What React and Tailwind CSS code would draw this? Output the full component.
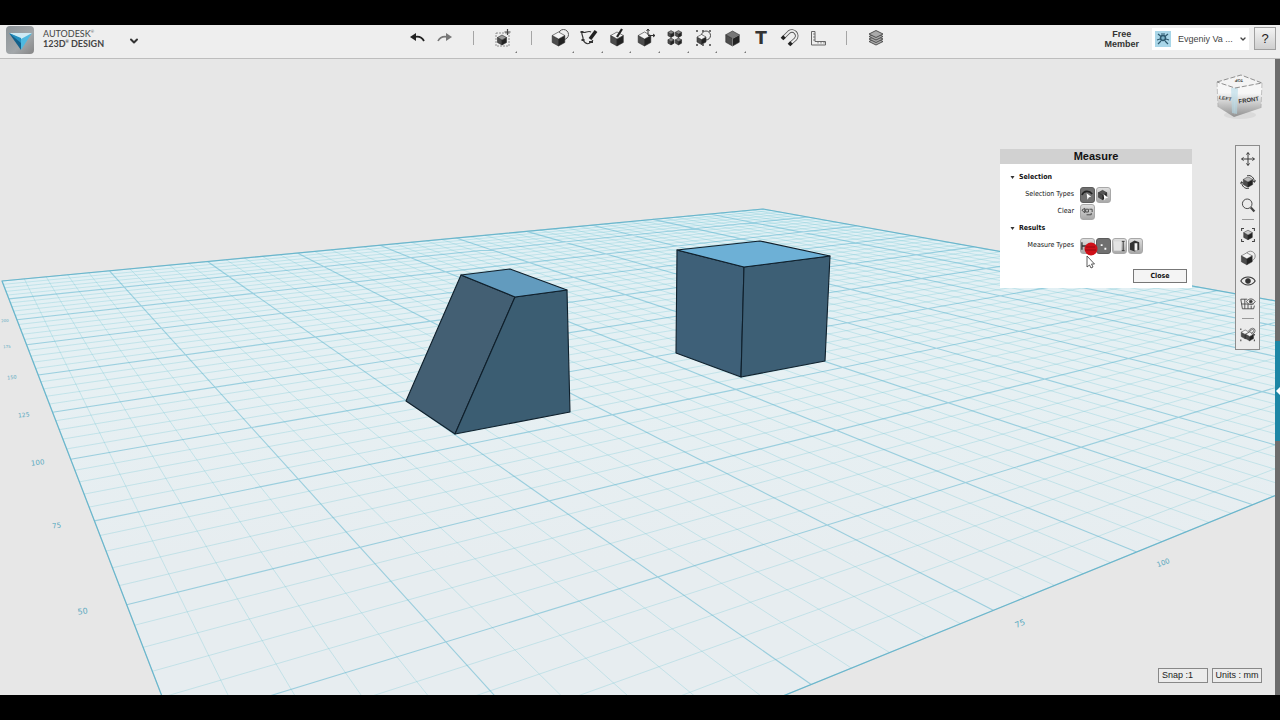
import React from 'react';
import { ChevronDown } from 'lucide-react';

// Perspective of the 250 x 250 mm work plane, one unit is 25 mm
const project = (u, v) => {
  const w = 1 + 0.048047 * u - 0.073887 * v;
  return [(112.76 * u + 6.226 * v + 2) / w, (2.842 * u - 4.217 * v + 281) / w];
};

const linePath = (from, to) => `M${from.join(' ')}L${to.join(' ')}`;

const gridLines = (major) =>
  Array.from({ length: 51 }, (_, i) => i)
    .filter((i) => (i % 5 === 0) === major)
    .map((i) => linePath(project(i / 5, 0), project(i / 5, 10)) + linePath(project(0, i / 5), project(10, i / 5)))
    .join('');

const planeCorners = [project(0, 0), project(10, 0), project(10, 10), project(0, 10)];
const planePoints = planeCorners.map((p) => p.join(',')).join(' ');

const rulerLabels = [
  { text: '50', x: 83, y: 614, size: 8, angle: -8 },
  { text: '75', x: 57, y: 528, size: 7, angle: -8 },
  { text: '100', x: 38, y: 465, size: 7, angle: -7 },
  { text: '125', x: 24, y: 417, size: 6, angle: -6 },
  { text: '150', x: 12, y: 379, size: 5, angle: -5 },
  { text: '175', x: 7, y: 348, size: 4, angle: -5 },
  { text: '200', x: 5, y: 322, size: 4, angle: -5 },
  { text: '75', x: 1021, y: 626, size: 8, angle: -22 },
  { text: '100', x: 1164, y: 565, size: 7, angle: -20 },
];

const Scene = () => (
  <svg
    className="absolute inset-0 w-full h-full"
    viewBox="0 59 1275 636"
    preserveAspectRatio="xMidYMid slice"
    role="img"
    aria-label="Work plane with two solids"
  >
    <defs>
      <linearGradient id="plane" x1="0" y1="209" x2="0" y2="560" gradientUnits="userSpaceOnUse">
        <stop offset="0" stopColor="#e0f0f5" />
        <stop offset="0.5" stopColor="#e6f0f3" />
        <stop offset="1" stopColor="#e7edf0" />
      </linearGradient>
    </defs>
    <polygon points={planePoints} fill="url(#plane)" />
    <path d={gridLines(false)} stroke="#6cc3d2" strokeOpacity="0.29" fill="none" />
    <path d={gridLines(true)} stroke="#4fb0cc" strokeOpacity="0.5" strokeWidth="1.1" fill="none" />
    <polygon points={planePoints} fill="none" stroke="#4aa6c2" strokeWidth="1.2" strokeOpacity="0.6" />

    {rulerLabels.map(({ text, x, y, size, angle }) => (
      <text
        key={`${text}-${x}`}
        x={x}
        y={y}
        fontSize={size}
        textAnchor="middle"
        fill="#5aa9bf"
        fontFamily="'DejaVu Sans', sans-serif"
        transform={`rotate(${angle} ${x} ${y})`}
      >
        {text}
      </text>
    ))}

    <g stroke="#0f1f2b" strokeWidth="1.1" strokeLinejoin="round">
      <polygon points="461,275 515,297 455,434 406,401" fill="#435f73" />
      <polygon points="515,297 567,290 570,412 455,434" fill="#3b5d72" />
      <polygon points="461,275 510,269 567,290 515,297" fill="#629bbe" />
      <polygon points="677,250 744,267 741,377 676,353" fill="#3e6078" />
      <polygon points="744,267 830,256 825,361 741,377" fill="#3d5f75" />
      <polygon points="677,250 760,241 830,256 744,267" fill="#6db0d6" />
    </g>
  </svg>
);

const Cube = ({ x = 10, y = 10, r = 8, top = '#f4f4f4' }) => {
  const w = r * 0.9;
  const h = r * 0.5;
  return (
    <g stroke="#2e2e2e" strokeWidth="0.6" strokeLinejoin="round">
      <polygon points={`${x - w},${y - h} ${x},${y} ${x},${y + r} ${x - w},${y + h}`} fill="#4c4c4c" />
      <polygon points={`${x + w},${y - h} ${x},${y} ${x},${y + r} ${x + w},${y + h}`} fill="#222" />
      <polygon points={`${x},${y - r} ${x + w},${y - h} ${x},${y} ${x - w},${y - h}`} fill={top} />
    </g>
  );
};

const icons = {
  undo: (
    <g>
      <path d="M3 9L9 5V13Z" fill="#222" />
      <path d="M7 9C11 8 15 9 17 13" fill="none" stroke="#222" strokeWidth="1.8" />
    </g>
  ),
  redo: (
    <g>
      <path d="M17 9L11 5V13Z" fill="#777" />
      <path d="M13 9C9 8 5 9 3 13" fill="none" stroke="#777" strokeWidth="1.6" />
    </g>
  ),
  insert: (
    <g>
      <rect x="3" y="5" width="13" height="13" fill="none" stroke="#777" strokeWidth="0.8" strokeDasharray="2 1" />
      <Cube x={9} y={12} r={5} top="#999" />
      <path d="M14.5 1V7M11.5 4H17.5" stroke="#444" strokeWidth="1.2" />
    </g>
  ),
  primitives: (
    <g>
      <circle cx="13.5" cy="6.5" r="5" fill="#eee" stroke="#555" />
      <Cube x={8.5} y={11} r={7} />
    </g>
  ),
  sketch: (
    <g fill="none" stroke="#333">
      <path d="M12 4C9 2 6 6 3 4C2 7 5 9 4 12C7 17 10 17 14 12" strokeWidth="1.2" />
      <path d="M17 3L11 11" strokeWidth="3.4" stroke="#222" />
      <path d="M1.5 4H4.5M2.5 12H5.5M10 14H14" strokeWidth="1.8" />
    </g>
  ),
  construct: (
    <g>
      <Cube x={10} y={11} r={7} />
      <path d="M15 1L10 9" stroke="#222" strokeWidth="2.2" />
    </g>
  ),
  modify: (
    <g>
      <Cube x={8.5} y={11} r={7} />
      <path d="M12 7V1M10.5 3L12 1L13.500 3M12 7.5H19M17 6L19 7.5L17 9" fill="none" stroke="#333" />
    </g>
  ),
  pattern: (
    <g>
      <Cube x={6} y={6} r={3.4} top="#888" />
      <Cube x={13.5} y={6} r={3.4} top="#888" />
      <Cube x={6} y={13.5} r={3.4} top="#888" />
      <Cube x={13.5} y={13.5} r={3.4} top="#888" />
    </g>
  ),
  grouping: (
    <g>
      <path d="M3 3H5M9 3H11M16 3H18M3 17H5M9 17H11M16 17H18" stroke="#444" strokeWidth="1.4" />
      <circle cx="13" cy="7.5" r="4.5" fill="#eee" stroke="#444" />
      <Cube x={8.5} y={11.5} r={5} />
    </g>
  ),
  combine: (
    <g>
      <Cube x={10.5} y={10.5} r={7.5} top="#777" />
      <path d="M10.5 18V10.5L17 7" stroke="#aaa" strokeWidth="0.6" fill="none" />
    </g>
  ),
  text: (
    <text x="10" y="16" fontSize="17" fontWeight="bold" textAnchor="middle" fill="#333" fontFamily="'DejaVu Sans', sans-serif">
      T
    </text>
  ),
  magnet: (
    <g fill="none">
      <path d="M4 10L10 4A4.8 4.8 0 0 1 16.5 11L11 16" stroke="#555" strokeWidth="3.6" />
      <path d="M4 10L10 4A4.8 4.8 0 0 1 16.5 11L11 16" stroke="#eee" strokeWidth="1.9" />
      <path d="M3 11L5.5 8.5M10 17L12.500 14.500" stroke="#222" strokeWidth="3.8" />
    </g>
  ),
  ruler: (
    <g fill="none" stroke="#666">
      <path d="M3.5 3.5H7V13.5H17.5V17H3.5Z" />
      <path d="M5 6H7M5 9H7M5 12H7M10 14V15.5M13 14V15.5M16 14V15.5" strokeWidth="0.8" />
    </g>
  ),
  layers: (
    <g stroke="#444" strokeWidth="0.9" strokeLinejoin="round">
      {[14, 11.5, 9, 6.5].map((y) => (
        <polygon key={y} points={`10,${y - 4} 17,${y - 0.5} 10,${y + 3} 3,${y - 0.5}`} fill="#aaa" />
      ))}
    </g>
  ),
  pan: (
    <path
      d="M10 2V18M2 10H18M8 4.5L10 2L12 4.5M8 15.5L10 18L12 15.5M4.500 8L2 10L4.500 12M15.5 8L18 10L15.5 12"
      fill="none"
      stroke="#333"
      strokeWidth="1.2"
    />
  ),
  orbit: (
    <g>
      <Cube x={10} y={10} r={6.5} top="#bbb" />
      <path d="M9 2C14 1 18 5 18 10M16 8L18 10.5L19.5 8M11 18C6 19 2 15 2 10M0.5 12L2 9.5L4 12" fill="none" stroke="#333" strokeWidth="1.2" />
    </g>
  ),
  zoom: (
    <g fill="none" stroke="#444">
      <circle cx="9" cy="8.5" r="6" strokeWidth="1.2" />
      <path d="M13.5 13L18 18" strokeWidth="2.8" />
    </g>
  ),
  fit: (
    <g>
      <path d="M2 5V2H5M15 2H18V5M18 15V18H15M5 18H2V15" fill="none" stroke="#444" strokeWidth="1.3" />
      <Cube x={10} y={10} r={6} top="#ccc" />
    </g>
  ),
  shading: (
    <g>
      <circle cx="13" cy="7.5" r="6" fill="#eee" stroke="#777" />
      <Cube x={8.5} y={11} r={7.5} />
    </g>
  ),
  eye: (
    <g fill="none" stroke="#333" strokeWidth="1.3">
      <path d="M1 10C5 3.5 15 3.5 19 10C15 16.5 5 16.5 1 10Z" />
      <circle cx="10" cy="10" r="2.8" fill="#333" />
    </g>
  ),
  gridEye: (
    <g fill="none" stroke="#444" strokeWidth="1.1">
      <path d="M1 4H9M1 4L3 16H17L18 12M2 10H17M6 4V16M10 10V16M14 12V16" />
      <path d="M8 7C11 2.5 16 2.5 19 7C16 11.5 11 11.5 8 7Z" fill="#eee" />
      <circle cx="13.5" cy="7" r="1.8" fill="#333" />
    </g>
  ),
  snap: (
    <g>
      <path d="M1 3V5M1 17V19M18 17V19M18 10V12" stroke="#555" strokeWidth="1.5" />
      <Cube x={6.5} y={10.5} r={5.5} />
      <Cube x={12} y={13} r={5.5} />
      <path d="M11 7L14 4A2.500 2.500 0 0 1 17.5 7.5L14.5 10" fill="none" stroke="#555" strokeWidth="2.4" />
      <path d="M11 7L14 4A2.500 2.500 0 0 1 17.5 7.5L14.5 10" fill="none" stroke="#eee" />
    </g>
  ),
};

const tools = [
  { id: 'undo', label: 'Undo' },
  { id: 'redo', label: 'Redo' },
  { divider: true },
  { id: 'insert', label: 'Transform', menu: true },
  { divider: true },
  { id: 'primitives', label: 'Primitives', menu: true },
  { id: 'sketch', label: 'Sketch', menu: true },
  { id: 'construct', label: 'Construct', menu: true },
  { id: 'modify', label: 'Modify', menu: true },
  { id: 'pattern', label: 'Pattern', menu: true },
  { id: 'grouping', label: 'Grouping', menu: true },
  { id: 'combine', label: 'Combine', menu: true },
  { id: 'text', label: 'Text' },
  { id: 'magnet', label: 'Snap' },
  { id: 'ruler', label: 'Measure' },
  { divider: true },
  { id: 'layers', label: 'Material' },
];

const viewTools = [
  { id: 'pan', label: 'Pan' },
  { id: 'orbit', label: 'Orbit' },
  { id: 'zoom', label: 'Zoom' },
  { divider: true },
  { id: 'fit', label: 'Fit' },
  { id: 'shading', label: 'Shading' },
  { id: 'eye', label: 'Visibility' },
  { id: 'gridEye', label: 'Grid visibility' },
  { divider: true },
  { id: 'snap', label: 'Snapping' },
];

const Toolbar = () => (
  <nav className="flex justify-between w-[487px] ml-3" aria-label="Tools">
    {tools.map(({ id, label, menu, divider }, i) =>
      divider ? (
        <div key={i} className="w-7 flex justify-center pt-[6px]">
          <span className="w-px h-[14px] bg-[#a5a5a5]" />
        </div>
      ) : (
        <button key={id} type="button" aria-label={label} className="w-7 h-[33px]">
          <svg viewBox="0 0 28 33" className="w-7 h-[33px] block">
            <g transform="translate(4 3)">{icons[id]}</g>
            {menu && <path d="M28 26V28H26Z" fill="#777" />}
          </svg>
        </button>
      )
    )}
  </nav>
);

const Logo = () => (
  <svg viewBox="0 0 28 28" className="w-7 h-7">
    <defs>
      <linearGradient id="logo" x1="0" y1="0" x2="1" y2="1">
        <stop offset="0" stopColor="#8b9398" />
        <stop offset="0.6" stopColor="#a3a7aa" />
        <stop offset="1" stopColor="#858585" />
      </linearGradient>
    </defs>
    <rect width="28" height="28" rx="4" fill="url(#logo)" />
    <path d="M3 7L15 12L15 24Z" fill="#14608a" />
    <path d="M26 7L15 12L15 24Z" fill="#4fb9e0" />
    <path d="M3 7L26 7L15 13Z" fill="#cfeaf4" />
    <path d="M3 7L15 12L15 17Z" fill="#2490c0" />
  </svg>
);

const Avatar = () => (
  <svg viewBox="0 0 16 16" className="w-4 h-4">
    <rect width="16" height="16" fill="#a9d6e8" />
    <circle cx="8" cy="7" r="2.5" fill="#7fb5ca" stroke="#2c586e" strokeWidth="1.5" />
    <path
      d="M3 3L5.5 5M13 3L10.5 5M2 9L5 8M14 9L11 8M3 13L6 10M13 13L10 10M6 3H10"
      stroke="#2c586e"
      strokeWidth="1.2"
      fill="none"
    />
  </svg>
);

const Header = () => (
  <header className="grid grid-cols-[1fr_auto_1fr] h-[34px] shrink-0 bg-[#eeeeee] border-b border-[#bdbdbd]">
    <div className="flex items-start gap-2 pl-[6px] pt-px">
      <Logo />
      <div className="flex items-center gap-6 pt-[3px]">
        <h1 className="font-['Lato',sans-serif] text-[9px] leading-[10px] text-[#444] pl-px">
          <span className="block">
            AUTODESK<sup className="text-[4px] top-[-4px]">®</sup>
          </span>
          <span className="block font-bold">
            123D<sup className="text-[4px] top-[-4px]">®</sup> DESIGN
          </span>
        </h1>
        <button type="button" aria-label="Application menu" className="pt-1">
          <ChevronDown className="w-3 h-3 text-[#333]" strokeWidth={4} />
        </button>
      </div>
    </div>

    <Toolbar />

    <div className="flex items-start justify-end gap-[5px] pr-1 pt-[3px]">
      <p className="text-[9px] leading-[10px] font-bold text-center text-[#333] pt-px mr-2">
        Free
        <br />
        Member
      </p>
      <button type="button" className="flex items-center w-[97px] h-[22px] bg-white pl-[3px] pr-[2px] text-[#444]">
        <Avatar />
        <span className="flex-1 text-left text-[9px] pl-[7px] pt-px whitespace-nowrap">Evgeniy Va ...</span>
        <ChevronDown className="w-2 h-2" strokeWidth={4} />
      </button>
      <button
        type="button"
        aria-label="Help"
        className="w-[22px] h-[23px] -mt-px border border-[#a0a0a0] bg-linear-to-b from-[#f3f3f3] to-[#cfcfcf] text-[13px] leading-none text-[#222]"
      >
        ?
      </button>
    </div>
  </header>
);

const ViewCube = () => (
  <svg viewBox="0 0 50 50" className="w-[50px] h-[50px]" role="img" aria-label="View cube">
    <defs>
      <linearGradient id="cubeFace" x1="0" y1="0" x2="0" y2="1">
        <stop offset="0.3" stopColor="#f7f7f7" />
        <stop offset="1" stopColor="#909090" />
      </linearGradient>
    </defs>
    <ellipse cx="26" cy="44" rx="16" ry="4" fill="#dadada" />
    <polygon points="3,11 21,17 20,46 4,36" fill="url(#cubeFace)" />
    <polygon points="21,17 48,12 47,37 20,46" fill="url(#cubeFace)" />
    <polygon points="3,11 27,4 48,12 21,17" fill="#f4f4f4" />
    <polygon points="17,17 24,17 23,43 18,42" fill="#b5dbe8" opacity="0.6" />
    <path d="M3 11L27 4L48 12L21 17Z" fill="none" stroke="#777" strokeWidth="0.8" strokeDasharray="5 2" />
    <path d="M3 11L4 36M48 12L47 37" stroke="#aaa" strokeWidth="0.7" strokeDasharray="5 2" />
    <g fontFamily="'Liberation Sans', sans-serif" fontWeight="bold" fill="#333" textAnchor="middle">
      <text x="11" y="29" fontSize="5" transform="rotate(10 11 29)">LEFT</text>
      <text x="35" y="31" fontSize="6" transform="rotate(-8 35 31)">FRONT</text>
      <text x="25" y="8" fontSize="4" transform="rotate(180 25 8)">TOP</text>
    </g>
  </svg>
);

const ViewBar = () => (
  <nav className="w-[25px] border border-[#8c8c8c] bg-[#ebebeb] pt-px pb-1 mr-[10px]" aria-label="View">
    {viewTools.map(({ id, label, divider }, i) =>
      divider ? (
        <div key={i} className="h-[7px] flex items-center justify-center">
          <span className="w-3 h-px bg-[#999]" />
        </div>
      ) : (
        <button key={id} type="button" aria-label={label} className="flex w-full h-[23px] items-center justify-center">
          <svg viewBox="0 0 20 20" className="w-4 h-4">
            {icons[id]}
          </svg>
        </button>
      )
    )}
  </nav>
);

const PanelButton = ({ label, active, children }) => (
  <button
    type="button"
    aria-label={label}
    aria-pressed={active}
    className={`w-[15px] h-4 rounded-[3px] border ${
      active ? 'bg-[#707070] border-[#5c5c5c]' : 'bg-linear-to-b from-[#dedede] to-[#a9a9a9] border-[#a8a8a8]'
    }`}
  >
    <svg viewBox="0 0 14 14" className="w-[13px] h-[14px]">
      {children}
    </svg>
  </button>
);

const SectionTitle = ({ children }) => (
  <h3 className="flex items-center h-[17px] pl-[10px] gap-1 font-bold">
    <svg viewBox="0 0 5 4" className="w-[5px] h-1">
      <path d="M0.5 0H4.5L2.500 3Z" fill="#333" />
    </svg>
    {children}
  </h3>
);

const PanelRow = ({ label, children }) => (
  <div className="flex items-center h-[17px]" role="group" aria-label={label}>
    <span className="w-[75px] text-right pr-px mr-[5px]">{label}</span>
    <div className="flex gap-px">{children}</div>
  </div>
);

const MeasurePanel = () => (
  <section className="relative w-48 bg-white pb-[5px] mt-1 font-['DejaVu_Sans_Condensed','DejaVu_Sans',sans-serif] text-[7px] text-[#111]">
    <h2 className="h-[15px] mb-[5px] bg-[#d1d1d1] text-center text-[11px] leading-[15px] font-bold font-['Liberation_Sans',sans-serif]">
      Measure
    </h2>
    <SectionTitle>Selection</SectionTitle>
    <PanelRow label="Selection Types">
      <PanelButton label="Select edge" active>
        <path d="M1 7C3 2 9 2 12 6" fill="none" stroke="#222" strokeWidth="1.8" />
        <path d="M6 5L11 9L8.5 9.5L7 12Z" fill="#fff" />
      </PanelButton>
      <PanelButton label="Select body">
        <Cube x={6} y={7} r={5} top="#555" />
        <path d="M7 6L12 10L9.5 10.5L8 13Z" fill="#fff" />
      </PanelButton>
    </PanelRow>
    <PanelRow label="Clear">
      <PanelButton label="Clear selection">
        <path d="M1 5L4 3V8ZM5 4H8V7H5ZM9 4H12V7M6 10H11V8" fill="none" stroke="#444" />
      </PanelButton>
    </PanelRow>
    <SectionTitle>Results</SectionTitle>
    <PanelRow label="Measure Types">
      <PanelButton label="Distance">
        <path d="M1 3V11M1 7H12" stroke="#333" strokeWidth="1.4" />
      </PanelButton>
      <PanelButton label="Angle" active>
        <path d="M8 9H10V11H8ZM4 5H6V7H4Z" fill="#fff" />
      </PanelButton>
      <PanelButton label="Length">
        <path d="M1 2H9V12H1Z" fill="#e4e4e4" />
        <path d="M11 2V12M9.5 2H12.500M9.5 12H12.500" stroke="#333" />
      </PanelButton>
      <PanelButton label="Volume">
        <path d="M1 4L6 1L11 3V11L6 13L1 11Z" fill="#333" />
        <path d="M6 4H9V12H6Z" fill="#f4f4f4" />
      </PanelButton>
    </PanelRow>
    <div className="flex justify-end pt-[15px] pr-[5px]">
      <button type="button" className="w-[54px] h-[14px] border border-[#777] bg-[#f4f4f4] font-bold leading-none">
        Close
      </button>
    </div>

    {/* click marker and pointer over the panel */}
    <svg viewBox="0 0 20 30" className="absolute left-[82px] top-[93px] w-5 h-[30px] pointer-events-none">
      <circle cx="9" cy="7" r="6.5" fill="#cf1019" />
      <path d="M3 8H14M4 5H13" stroke="#8c0a10" strokeWidth="0.8" />
      <path d="M5 14V25L7.5 23L9 26L11 25L9.5 22H12.500Z" fill="#fff" stroke="#333" strokeWidth="0.8" />
    </svg>
  </section>
);

const StatusBar = () => (
  <div className="flex justify-end gap-1 pr-[13px] pb-3 text-[9px] leading-[13px] text-[#222]">
    <button type="button" className="w-[50px] h-[15px] border border-[#888] bg-[#ececec] pl-[3px] text-left">
      Snap :1
    </button>
    <button type="button" className="w-[50px] h-[15px] border border-[#888] bg-[#ececec] text-center whitespace-nowrap">
      Units : mm
    </button>
  </div>
);

const App = () => (
  <div className="flex flex-col h-screen min-h-[480px] bg-black py-[25px] font-['Liberation_Sans',sans-serif]">
    <Header />
    <div className="flex flex-1 min-h-0">
      <main className="relative flex-1 min-w-0 overflow-hidden bg-[#e7e7e7]">
        <Scene />
        <div className="relative flex flex-col justify-between h-full">
          <div className="flex flex-col items-end pt-3 pr-[5px]">
            <div className="mr-[6px]">
              <ViewCube />
            </div>
            <div className="flex items-start gap-[43px] pt-6">
              <MeasurePanel />
              <ViewBar />
            </div>
          </div>
          <StatusBar />
        </div>
      </main>
      <aside className="flex flex-col justify-center w-[5px] pt-7 bg-[#6c6c6c]">
        <button type="button" aria-label="Open side panel" className="flex items-center w-full h-[100px] bg-[#1d86a5]">
          <svg viewBox="0 0 5 8" className="w-[5px] h-2">
            <path d="M5 0V8L1 4Z" fill="#fff" />
          </svg>
        </button>
      </aside>
    </div>
  </div>
);

export default App;
